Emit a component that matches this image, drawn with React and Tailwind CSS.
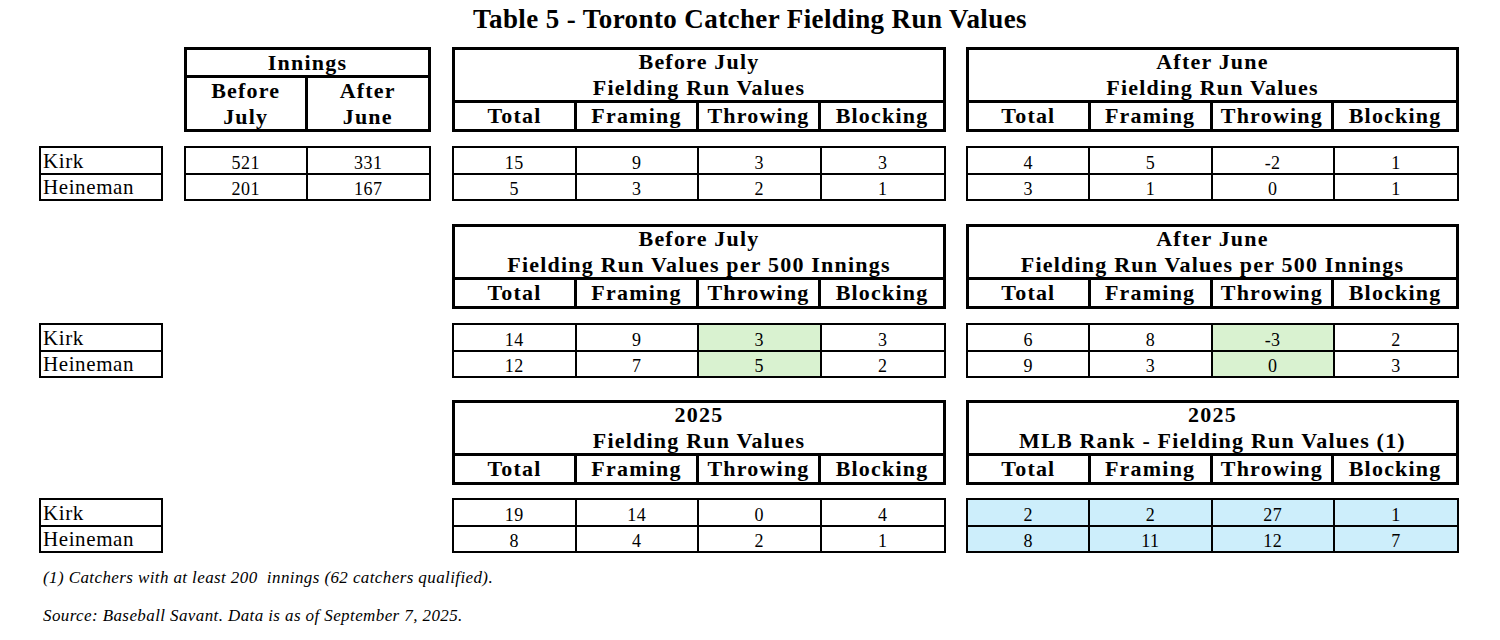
import React from "react";

const COLS = ["Total", "Framing", "Throwing", "Blocking"];

const HeadTable = ({ lines, w }) => (
  <div className={`${w} h-[85px] border-[3px] border-black flex flex-col font-bold text-[22px] tracking-[1.2px] leading-[26px]`}>
    <div className="h-[53px] border-b-[3px] border-black flex flex-col items-center justify-center">
      {lines.map((l) => (
        <div key={l}>{l}</div>
      ))}
    </div>
    <div className="flex-1 grid grid-cols-4 divide-x-[3px] divide-black">
      {COLS.map((c) => (
        <div key={c} className="flex items-center justify-center">
          {c}
        </div>
      ))}
    </div>
  </div>
);

const DataTable = ({ rows, w, tint = [], cols = 4 }) => (
  <div className={`${w} h-[55px] border-2 border-black flex flex-col text-[18px] tracking-[0.5px]`}>
    {rows.map((r, i) => (
      <div
        key={i}
        className={`flex-1 grid ${cols === 2 ? "grid-cols-2" : "grid-cols-4"} divide-x-2 divide-black ${i === 0 ? "border-b-2 border-black" : ""}`}
      >
        {r.map((v, j) => (
          <div key={j} className={`flex items-end justify-center pb-[1px] leading-none ${tint[j] || ""}`}>
            {v}
          </div>
        ))}
      </div>
    ))}
  </div>
);

const Names = () => (
  <div className="w-[124px] h-[55px] border-2 border-black flex flex-col text-[21px] tracking-[0.6px] leading-none">
    <div className="flex-1 border-b-2 border-black flex items-end pl-[2px] pb-[1px]">Kirk</div>
    <div className="flex-1 flex items-end pl-[2px] pb-[1px]">Heineman</div>
  </div>
);

const G = "bg-[#d9f2d0]";
const B = "bg-[#cdeefb]";

export default function App() {
  return (
    <div className="w-[1500px] h-[640px] bg-white text-black font-['Liberation_Serif',serif] relative">
      <div className="text-center font-bold text-[27px] tracking-[0.4px] leading-none pt-[6px] h-[47px]">
        Table 5 - Toronto Catcher Fielding Run Values
      </div>

      <div className="pl-[39px] flex flex-col">
        {/* block 1 */}
        <div className="flex gap-[21px]">
          <div className="w-[124px]" />
          <div className="w-[247px] h-[85px] border-[3px] border-black flex flex-col font-bold text-[22px] tracking-[1.2px] leading-[26px]">
            <div className="h-[28px] border-b-[3px] border-black flex items-center justify-center">Innings</div>
            <div className="flex-1 grid grid-cols-2 divide-x-[3px] divide-black">
              <div className="flex flex-col items-center justify-center">
                <div>Before</div>
                <div>July</div>
              </div>
              <div className="flex flex-col items-center justify-center">
                <div>After</div>
                <div>June</div>
              </div>
            </div>
          </div>
          <HeadTable w="w-[494px]" lines={["Before July", "Fielding Run Values"]} />
          <HeadTable w="w-[493px] -ml-px" lines={["After June", "Fielding Run Values"]} />
        </div>
        <div className="flex gap-[21px] mt-[14px]">
          <Names />
          <DataTable w="w-[247px]" cols={2} rows={[["521", "331"], ["201", "167"]]} />
          <DataTable w="w-[494px]" rows={[["15", "9", "3", "3"], ["5", "3", "2", "1"]]} />
          <DataTable w="w-[493px] -ml-px" rows={[["4", "5", "-2", "1"], ["3", "1", "0", "1"]]} />
        </div>

        {/* block 2 */}
        <div className="flex gap-[21px] mt-[23px]">
          <div className="w-[124px]" />
          <div className="w-[247px]" />
          <HeadTable w="w-[494px]" lines={["Before July", "Fielding Run Values per 500 Innings"]} />
          <HeadTable w="w-[493px] -ml-px" lines={["After June", "Fielding Run Values per 500 Innings"]} />
        </div>
        <div className="flex gap-[21px] mt-[14px]">
          <Names />
          <div className="w-[247px]" />
          <DataTable w="w-[494px]" tint={["", "", G, ""]} rows={[["14", "9", "3", "3"], ["12", "7", "5", "2"]]} />
          <DataTable w="w-[493px] -ml-px" tint={["", "", G, ""]} rows={[["6", "8", "-3", "2"], ["9", "3", "0", "3"]]} />
        </div>

        {/* block 3 */}
        <div className="flex gap-[21px] mt-[22px]">
          <div className="w-[124px]" />
          <div className="w-[247px]" />
          <HeadTable w="w-[494px]" lines={["2025", "Fielding Run Values"]} />
          <HeadTable w="w-[493px] -ml-px" lines={["2025", "MLB Rank - Fielding Run Values (1)"]} />
        </div>
        <div className="flex gap-[21px] mt-[13px]">
          <Names />
          <div className="w-[247px]" />
          <DataTable w="w-[494px]" rows={[["19", "14", "0", "4"], ["8", "4", "2", "1"]]} />
          <DataTable w="w-[493px] -ml-px" tint={[B, B, B, B]} rows={[["2", "2", "27", "1"], ["8", "11", "12", "7"]]} />
        </div>

        <div className="italic text-[17px] tracking-[0.4px] pl-[4px] mt-[16px] leading-none">
          (1) Catchers with at least 200&nbsp; innings (62 catchers qualified).
        </div>
        <div className="italic text-[17px] tracking-[0.4px] pl-[4px] mt-[21px] leading-none">
          Source: Baseball Savant. Data is as of September 7, 2025.
        </div>
      </div>
    </div>
  );
}
